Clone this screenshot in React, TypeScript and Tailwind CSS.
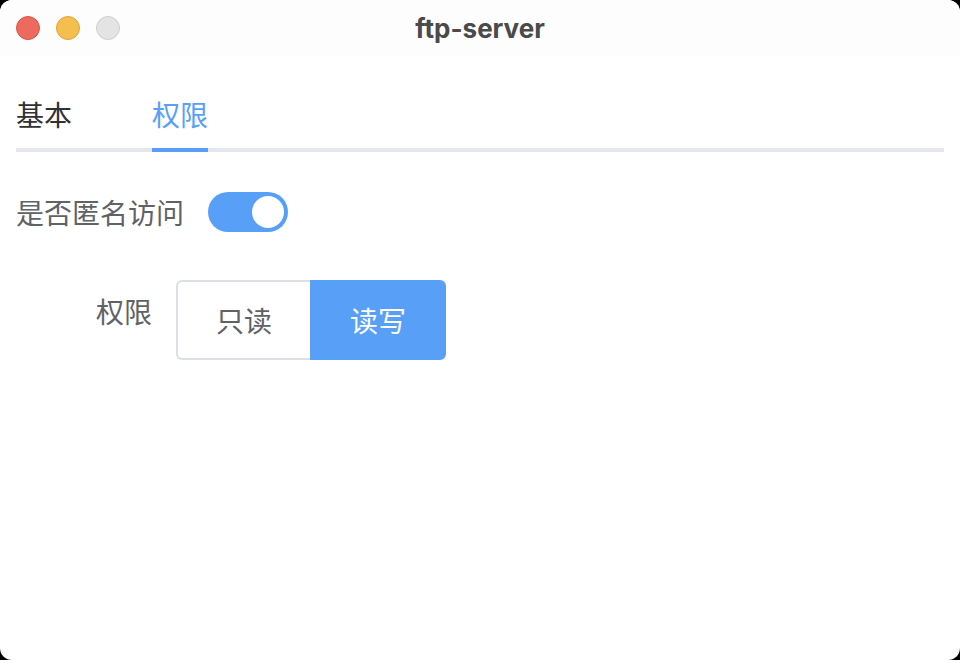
import { useState } from 'react';

const cjk = { fontFamily: '"Noto Sans CJK SC", "Noto Sans", sans-serif' };

function TrafficLights() {
    return (
        <div className="flex items-center gap-4 pl-4">
            <span className="h-6 w-6 rounded-full border border-[#d9564b] bg-[#ed6a5e]" />
            <span className="h-6 w-6 rounded-full border border-[#dea53c] bg-[#f5bf4f]" />
            <span className="h-6 w-6 rounded-full border border-[#cfcfcf] bg-[#e4e4e4]" />
        </div>
    );
}

export default function App() {
    const [tab, setTab] = useState('perm');
    const [anon, setAnon] = useState(true);
    const [mode, setMode] = useState('rw');

    const tabs = [
        { key: 'basic', label: '基本' },
        { key: 'perm', label: '权限' },
    ];

    return (
        <div className="h-[660px] w-[960px] bg-black">
            <div className="flex h-full w-full flex-col overflow-hidden rounded-[12px] bg-white">
                {/* Title bar */}
                <div className="relative flex h-14 shrink-0 items-center bg-[#fdfdfd]">
                    <TrafficLights />
                    <div
                        className="absolute inset-0 flex items-center justify-center text-[26px] font-bold text-[#4a4a4a]"
                        style={{ fontFamily: 'Inter, "Liberation Sans", sans-serif' }}
                    >
                        ftp-server
                    </div>
                </div>

                <div className="px-4" style={cjk}>
                    {/* Tabs */}
                    <div className="relative flex gap-20 border-b-4 border-[#e4e7ed] pt-6">
                        {tabs.map((t) => (
                            <button
                                key={t.key}
                                onClick={() => setTab(t.key)}
                                className={`relative flex h-[68px] items-center text-[28px] leading-none ${
                                    tab === t.key ? 'text-[#589ff8]' : 'text-[#303133]'
                                }`}
                            >
                                {t.label}
                                {tab === t.key && (
                                    <span className="absolute -bottom-1 left-0 right-0 h-1 bg-[#589ff8]" />
                                )}
                            </button>
                        ))}
                    </div>

                    {/* Form */}
                    <div className="mt-10 flex items-center gap-6">
                        <span className="text-[28px] leading-none text-[#606266]">是否匿名访问</span>
                        <button
                            onClick={() => setAnon(!anon)}
                            className={`flex h-10 w-20 items-center rounded-full px-1 transition-colors ${
                                anon ? 'justify-end bg-[#589ff8]' : 'justify-start bg-[#dcdfe6]'
                            }`}
                        >
                            <span className="h-8 w-8 rounded-full bg-white" />
                        </button>
                    </div>

                    <div className="mt-12 flex items-start gap-6">
                        <span className="w-[136px] pt-[17px] text-right text-[28px] leading-none text-[#606266]">
                            权限
                        </span>
                        <div className="flex h-20">
                            <button
                                onClick={() => setMode('ro')}
                                className={`flex w-[134px] items-center justify-center rounded-l-[6px] border-2 text-[28px] ${
                                    mode === 'ro'
                                        ? 'border-[#589ff8] bg-[#589ff8] text-white'
                                        : 'border-[#dcdfe6] border-r-0 bg-white text-[#606266]'
                                }`}
                            >
                                只读
                            </button>
                            <button
                                onClick={() => setMode('rw')}
                                className={`flex w-[136px] items-center justify-center rounded-r-[6px] border-2 text-[28px] ${
                                    mode === 'rw'
                                        ? 'border-[#589ff8] bg-[#589ff8] text-white'
                                        : 'border-[#dcdfe6] bg-white text-[#606266]'
                                }`}
                            >
                                读写
                            </button>
                        </div>
                    </div>
                </div>
            </div>
        </div>
    );
}
